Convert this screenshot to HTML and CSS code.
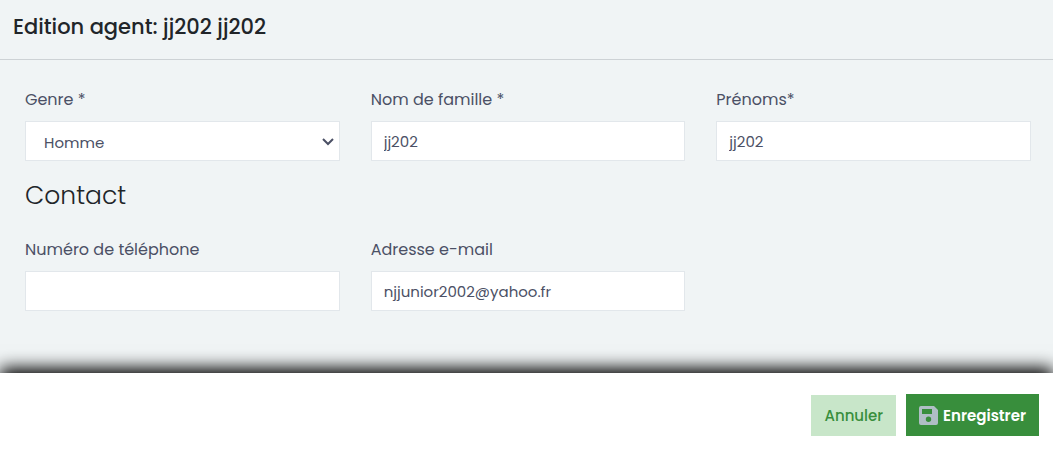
FILE: index.html
```html
<!DOCTYPE html>
<html lang="fr">
<head>
<meta charset="utf-8">
<meta name="viewport" content="width=device-width, initial-scale=1">
<title>Edition agent</title>
<link rel="stylesheet" href="styles.css">
</head>
<body>
<form class="dialog">
  <header class="dialog-header">
    <h1 class="dialog-title">Edition agent: jj202 jj202</h1>
  </header>
  <main class="dialog-body">
    <div class="form-grid">
      <div class="field">
        <label class="label" for="gender">Genre *</label>
        <div class="select-wrap">
          <select class="control select" id="gender"><option>Homme</option><option>Femme</option></select>
          <svg class="chevron" viewBox="0 0 12 8" aria-hidden="true"><path d="M1 1l5 5 5-5" fill="none" stroke="currentColor" stroke-width="2"/></svg>
        </div>
      </div>
      <div class="field">
        <label class="label" for="lastname">Nom de famille *</label>
        <input class="control" id="lastname" type="text" value="jj202">
      </div>
      <div class="field">
        <label class="label" for="firstname">Prénoms*</label>
        <input class="control" id="firstname" type="text" value="jj202">
      </div>
    </div>
    <h2 class="section-title">Contact</h2>
    <div class="form-grid">
      <div class="field">
        <label class="label" for="phone">Numéro de téléphone</label>
        <input class="control" id="phone" type="tel">
      </div>
      <div class="field">
        <label class="label" for="email">Adresse e-mail</label>
        <input class="control" id="email" type="email" value="njjunior2002@yahoo.fr">
      </div>
    </div>
  </main>
  <footer class="dialog-footer">
    <button class="button button-cancel" type="button">Annuler</button>
    <button class="button button-save" type="submit">
      <svg class="save-icon" viewBox="0 0 19 19" aria-hidden="true"><path fill="currentColor" fill-rule="evenodd" d="M2 0h13l4 4v13a2 2 0 0 1-2 2H2a2 2 0 0 1-2-2V2a2 2 0 0 1 2-2zM3 3v5h10V3zM9.500 10.500a2.700 2.700 0 1 0 0 5.400 2.700 2.700 0 0 0 0-5.400z"/></svg>
      <span>Enregistrer</span>
    </button>
  </footer>
</form>
</body>
</html>
```
FILE: styles.css
```css
* {
  box-sizing: border-box;
}

body {
  margin: 0;
  background: #f0f4f5;
  color: #4b5065;
  font-family: Poppins, Inter, "Open Sans", sans-serif;
}

.dialog {
  display: flex;
  flex-direction: column;
  min-height: 100vh;
}

.dialog-header {
  padding: 12px 13px 17px;
  border-bottom: 1px solid #cdd2d5;
}

.dialog-title {
  margin: 0;
  color: #212529;
  font-size: 21px;
  font-weight: 500;
  line-height: 30px;
}

.dialog-body {
  flex: 1;
  padding: 27px 22px 60px 25px;
}

.form-grid {
  display: grid;
  grid-template-columns: repeat(3, 1fr);
  gap: 31px;
}

.field {
  display: flex;
  flex-direction: column;
  gap: 9px;
  min-width: 0;
}

.label {
  font-size: 16px;
  line-height: 25px;
}

.control {
  width: 100%;
  height: 40px;
  padding: 0 12px;
  border: 1px solid #e2e7eb;
  border-radius: 0;
  outline: 0;
  background: #fff;
  color: #4b5065;
  font-family: inherit;
  font-size: 15px;
}

.select-wrap {
  position: relative;
}

.select {
  display: block;
  padding: 2px 30px 0 18px;
  appearance: none;
}

.chevron {
  position: absolute;
  top: 17px;
  right: 6px;
  width: 12px;
  height: 8px;
  pointer-events: none;
}

.section-title {
  margin: 17px 0 23px;
  color: #212529;
  font-size: 25px;
  font-weight: 300;
  line-height: 36px;
}

.dialog-footer {
  display: flex;
  justify-content: flex-end;
  align-items: flex-end;
  gap: 10px;
  padding: 21px 14px 15px;
  background: #fff;
  box-shadow: 0 -5px 16px #000;
}

.button {
  display: flex;
  align-items: center;
  gap: 5px;
  height: 41px;
  padding: 0 13px;
  border: 0;
  font-family: inherit;
  font-size: 15px;
  font-weight: 500;
}

.button-cancel {
  background: #c8e6c9;
  color: #388e3c;
}

.button-save {
  height: 42px;
  background: #388e3c;
  color: #fff;
  font-weight: 600;
}

.save-icon {
  width: 19px;
  height: 19px;
  color: #b0bec5;
}
```
